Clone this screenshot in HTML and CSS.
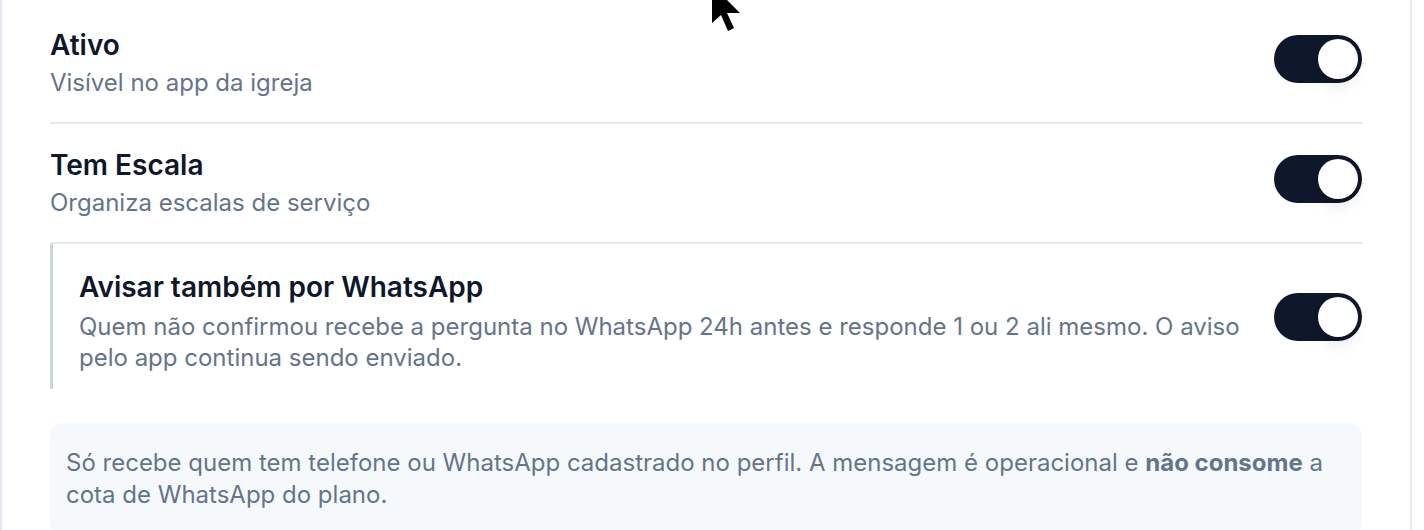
FILE: index.html
```html
<!DOCTYPE html>
<html lang="pt-BR">
<head>
<meta charset="UTF-8">
<meta name="viewport" content="width=device-width, initial-scale=1.0">
<title>Configurações do ministério</title>
<link rel="stylesheet" href="styles.css">
</head>
<body>

<div class="card">
  <div class="setting">
    <div class="setting-text">
      <div class="setting-title">Ativo</div>
      <div class="setting-desc">Visível no app da igreja</div>
    </div>
    <div class="toggle on"><span class="knob"></span></div>
  </div>

  <div class="setting">
    <div class="setting-text">
      <div class="setting-title">Tem Escala</div>
      <div class="setting-desc">Organiza escalas de serviço</div>
    </div>
    <div class="toggle on"><span class="knob"></span></div>
  </div>

  <div class="setting sub">
    <div class="setting-text">
      <div class="setting-title">Avisar também por WhatsApp</div>
      <div class="setting-desc">Quem não confirmou recebe a pergunta no WhatsApp 24h antes e responde 1 ou 2 ali mesmo. O aviso pelo app continua sendo enviado.</div>
    </div>
    <div class="toggle on"><span class="knob"></span></div>
  </div>

  <div class="note">
    Só recebe quem tem telefone ou WhatsApp cadastrado no perfil. A mensagem é operacional e <strong>não consome</strong> a cota de WhatsApp do plano.
  </div>
</div>

<!-- mouse pointer captured in the screenshot -->
<svg class="cursor" width="30" height="48" viewBox="0 0 30 48">
  <polygon points="0,0 0,38 9,30 16,46 22,43 15,28 28,28" fill="#000"/>
</svg>

</body>
</html>
```

FILE: styles.css
```css
body {
  margin: 0;
  padding: 0;
  overflow: hidden;
  font-family: Inter, "Noto Sans", sans-serif;
  background-color: #fff;
}

.card {
  margin-right: 12px;
  padding: 4px 48px 0;
  border-left: 2px solid #e2e8f0;
  border-right: 2px solid #e2e8f0;
}

.setting {
  display: flex;
  align-items: center;
  justify-content: space-between;
  gap: 24px;
  padding: 23px 0;
  border-bottom: 2px solid #e2e8f0;
}

.setting.sub {
  padding: 25px 0 16px 26px;
  border-bottom: none;
  border-left: 3px solid #cbd5e1;
}

.setting-title {
  font-size: 28px;
  line-height: 36px;
  font-weight: 600;
  color: #0f172a;
}

.setting-desc {
  margin-top: 4px;
  font-size: 24px;
  line-height: 32px;
  color: #64748b;
}

.sub .setting-desc {
  margin-top: 6px;
  line-height: 31px;
}

.toggle {
  flex-shrink: 0;
  display: flex;
  align-items: center;
  box-sizing: border-box;
  width: 88px;
  height: 48px;
  padding: 4px;
  margin-bottom: 8px;
  border-radius: 24px;
  background-color: #e2e8f0;
}

.toggle.on {
  justify-content: flex-end;
  background-color: #0f172a;
}

.knob {
  width: 40px;
  height: 40px;
  border-radius: 50%;
  background-color: #fff;
  box-shadow: 0 10px 15px -3px rgba(0, 0, 0, 0.1), 0 4px 6px -4px rgba(0, 0, 0, 0.1);
}

.note {
  margin-top: 34px;
  padding: 24px 16px;
  border-radius: 12px;
  background-color: #f6f9fc;
  font-size: 24px;
  line-height: 32px;
  color: #64748b;
}

.note strong {
  font-weight: 700;
}

.cursor {
  position: absolute;
  top: -15px;
  left: 712px;
}
```
